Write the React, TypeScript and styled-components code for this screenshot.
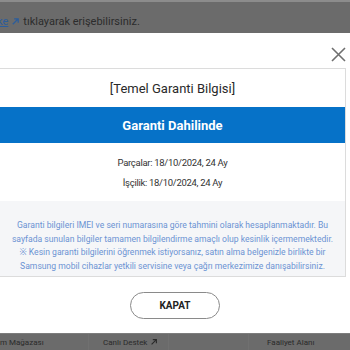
import React from 'react';
import styled, { createGlobalStyle } from 'styled-components';

const GlobalStyle = createGlobalStyle`
  html, body {
    margin: 0;
    padding: 0;
    background: #ffffff;
    font-family: Roboto, "Noto Sans", sans-serif;
  }
`;

const noticeLines = [
  'Garanti bilgileri IMEI ve seri numarasına göre tahmini olarak hesaplanmaktadır. Bu',
  'sayfada sunulan bilgiler tamamen bilgilendirme amaçlı olup kesinlik içermemektedir.',
  '※ Kesin garanti bilgilerini öğrenmek istiyorsanız, satın alma belgenizle birlikte bir',
  'Samsung mobil cihazlar yetkili servisine veya çağrı merkezimize danışabilirsiniz.',
];

const footerLinks = [
  { label: 'm Mağazası', arrow: false },
  { label: 'Canlı Destek', arrow: true },
  { label: '', arrow: false },
  { label: 'Faaliyet Alanı', arrow: false },
];

function ArrowIcon({ color, size = 9 }: { color: string; size?: number }) {
  return (
    <svg width={size} height={size} viewBox="0 0 10 10">
      <path d="M2 8 L8 2 M3.5 2 H8 V6.5" stroke={color} strokeWidth="1.4" fill="none" />
    </svg>
  );
}

export default function App() {
  return (
    <>
      <GlobalStyle />
      <Page>
        <TopBar>
          <TopText>
            <LinkText>ke</LinkText>
            <ArrowIcon color="#2b5d9c" />
            <span>tıklayarak erişebilirsiniz.</span>
          </TopText>
        </TopBar>

        <Modal>
          <CloseRow>
            <CloseButton aria-label="kapat">
              <svg width="15" height="15" viewBox="0 0 15 15">
                <path d="M1 1 L14 14 M14 1 L1 14" stroke="#6f6f6f" strokeWidth="1.6" />
              </svg>
            </CloseButton>
          </CloseRow>

          <Card>
            <Heading>[Temel Garanti Bilgisi]</Heading>
            <StatusBand>Garanti Dahilinde</StatusBand>
            <Dates>
              <DateLine>Parçalar: 18/10/2024, 24 Ay</DateLine>
              <DateLine>İşçilik: 18/10/2024, 24 Ay</DateLine>
            </Dates>
            <Notice>
              {noticeLines.map((line) => (
                <NoticeLine key={line}>{line}</NoticeLine>
              ))}
            </Notice>
          </Card>

          <ButtonRow>
            <CloseAction>KAPAT</CloseAction>
          </ButtonRow>
        </Modal>

        <Footer>
          {footerLinks.map((link, i) => (
            <FooterCell key={i}>
              {link.label}
              {link.arrow && <ArrowIcon color="#2a2a2a" size={8} />}
            </FooterCell>
          ))}
        </Footer>
      </Page>
    </>
  );
}

const Page = styled.div`
  width: 350px;
  height: 350px;
  display: flex;
  flex-direction: column;
  overflow: hidden;
`;

const TopBar = styled.div`
  height: 31px;
  flex-shrink: 0;
  background: #6b6b6b;
  border-top: 2px solid #8c8c8c;
  display: flex;
  align-items: flex-end;
`;

const TopText = styled.div`
  display: flex;
  align-items: center;
  gap: 3px;
  font-size: 11px;
  color: #2c2c2c;
  margin-left: -3px;
  padding-bottom: 5px;
`;

const LinkText = styled.span`
  color: #2b5d9c;
  text-decoration: underline;
`;

const Modal = styled.div`
  flex: 1;
  min-height: 0;
  display: flex;
  flex-direction: column;
  background: #ffffff;
`;

const CloseRow = styled.div`
  height: 35px;
  flex-shrink: 0;
  display: flex;
  justify-content: flex-end;
  align-items: flex-end;
  padding-right: 4px;
  padding-bottom: 6px;
  box-sizing: border-box;
`;

const CloseButton = styled.button`
  border: none;
  background: none;
  padding: 0;
  width: 15px;
  height: 15px;
  display: flex;
`;

const Card = styled.div`
  margin-left: -1px;
  margin-right: 4px;
  border: 1px solid #dcdcdc;
`;

const Heading = styled.div`
  height: 38px;
  display: flex;
  align-items: center;
  justify-content: center;
  font-size: 13px;
  color: #2a2a2a;
`;

const StatusBand = styled.div`
  height: 36px;
  display: flex;
  align-items: center;
  justify-content: center;
  background: #0672c8;
  color: #ffffff;
  font-size: 13px;
  font-weight: 700;
`;

const Dates = styled.div`
  padding: 10px 0 8px;
  display: flex;
  flex-direction: column;
  align-items: center;
`;

const DateLine = styled.div`
  font-size: 9.5px;
  letter-spacing: -0.3px;
  line-height: 20px;
  color: #333333;
`;

const Notice = styled.div`
  background: #f5f6f8;
  padding: 18px 0 3px;
  display: flex;
  flex-direction: column;
  align-items: center;
`;

const NoticeLine = styled.div`
  font-size: 8.6px;
  line-height: 13.5px;
  color: #6b93d3;
  white-space: nowrap;
`;

const ButtonRow = styled.div`
  flex: 1;
  display: flex;
  justify-content: center;
  align-items: flex-start;
  padding-top: 15px;
`;

const CloseAction = styled.button`
  width: 90px;
  height: 27px;
  border: 1px solid #8a8a8a;
  border-radius: 14px;
  background: #ffffff;
  font-family: Roboto, sans-serif;
  font-size: 10px;
  font-weight: 700;
  color: #222222;
  padding: 0;
`;

const Footer = styled.div`
  height: 16px;
  flex-shrink: 0;
  background: #6b6b6b;
  border-top: 1px solid #7d7d7d;
  display: grid;
  grid-template-columns: 88px 80px 80px 1fr;
`;

const FooterCell = styled.div`
  display: flex;
  align-items: center;
  gap: 3px;
  padding-left: 14px;
  font-size: 8px;
  color: #2a2a2a;
  white-space: nowrap;
  &:first-child {
    padding-left: 0;
  }
  &:not(:first-child) {
    border-left: 1px solid #707070;
  }
  &:nth-child(4) {
    padding-left: 18px;
  }
`;
